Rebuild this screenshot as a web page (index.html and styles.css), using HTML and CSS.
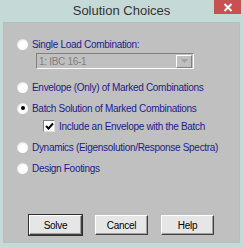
FILE: index.html
```html
<!DOCTYPE html>
<html lang="en">
<head>
    <meta charset="UTF-8">
    <title>Solution Choices</title>
    <link rel="stylesheet" href="styles.css">
</head>
<body>

    <div class="window">
        <div class="title-bar">
            <span class="title">Solution Choices</span>
            <span class="close-btn">
                <svg width="10" height="9" viewBox="0 0 10 9">
                    <path d="M1.5 1 L8.5 8 M8.5 1 L1.5 8" stroke="#fff" stroke-width="2" fill="none"/>
                </svg>
            </span>
        </div>

        <div class="client">
            <div class="option first">
                <span class="radio"></span>
                <span class="label">Single Load Combination:</span>
            </div>
            <div class="combo">
                <span class="combo-text">1: IBC 16-1</span>
                <span class="combo-btn">
                    <svg width="7" height="4" viewBox="0 0 7 4"><path d="M0 0 H7 L3.5 4 Z" fill="#a0a0a0"/></svg>
                </span>
            </div>
            <div class="option">
                <span class="radio"></span>
                <span class="label">Envelope (Only) of Marked Combinations</span>
            </div>
            <div class="option">
                <span class="radio checked"></span>
                <span class="label">Batch Solution of Marked Combinations</span>
            </div>
            <div class="check-row">
                <span class="checkbox">
                    <svg width="9" height="9" viewBox="0 0 9 9"><path d="M1 4 L3.5 6.5 L8 1.5" stroke="#000" stroke-width="2" fill="none"/></svg>
                </span>
                <span class="label">Include an Envelope with the Batch</span>
            </div>
            <div class="option">
                <span class="radio"></span>
                <span class="label">Dynamics (Eigensolution/Response Spectra)</span>
            </div>
            <div class="option">
                <span class="radio"></span>
                <span class="label">Design Footings</span>
            </div>

            <div class="buttons">
                <button class="btn default">Solve</button>
                <button class="btn">Cancel</button>
                <button class="btn">Help</button>
            </div>
        </div>
    </div>

</body>
</html>
```

FILE: styles.css
```css
* {
    margin: 0;
    padding: 0;
    box-sizing: border-box;
}

body {
    background: #c5dad7;
    font-family: "Liberation Sans", Arial, sans-serif;
}

.window {
    width: 243px;
    height: 247px;
    background: #c5dad7;
    display: flex;
    flex-direction: column;
    position: relative;
}

.title-bar {
    height: 22px;
    display: flex;
    justify-content: center;
    align-items: center;
}

.title {
    font-family: "Liberation Sans", Arial, sans-serif;
    font-size: 13px;
    color: #333;
    padding-bottom: 1px;
}

.close-btn {
    position: absolute;
    top: 0;
    right: 2px;
    width: 27px;
    height: 14px;
    background: #c75050;
    display: flex;
    justify-content: center;
    align-items: center;
}

.client {
    margin: 0 3px 4px 3px;
    flex: 1;
    background: #c0c0c0;
    border: 1px solid #adc3c0;
    padding: 14px 0 7px 13px;
    display: flex;
    flex-direction: column;
}

.option,
.check-row {
    display: flex;
    align-items: center;
    height: 14px;
    gap: 4px;
    margin-top: 7px;
}

.option.first {
    margin-top: 0;
}

.label {
    font-size: 10px;
    color: #1c1c8a;
    letter-spacing: -0.3px;
    white-space: nowrap;
}

.radio {
    width: 11px;
    height: 11px;
    border-radius: 50%;
    background: radial-gradient(circle at 60% 60%, #fff 45%, #e8e8e8 70%, #b8b8b8 100%);
    display: flex;
    justify-content: center;
    align-items: center;
}

.radio.checked::after {
    content: "";
    width: 4px;
    height: 4px;
    border-radius: 50%;
    background: #000;
}

.combo {
    margin: 2px 0 0 19px;
    width: 158px;
    height: 16px;
    border: 1px solid;
    border-color: #808080 #fff #fff #808080;
    background: #c0c0c0;
    display: flex;
    align-items: center;
    justify-content: space-between;
    padding: 0 1px 0 2px;
}

.combo + .option {
    margin-top: 11px;
}

.combo-text {
    font-size: 10px;
    color: #808080;
    letter-spacing: -0.3px;
}

.combo-btn {
    width: 16px;
    height: 13px;
    border: 1px solid;
    border-color: #fff #808080 #808080 #fff;
    display: flex;
    justify-content: center;
    align-items: center;
}

.check-row {
    margin-top: 4px;
    padding-left: 26px;
    gap: 4px;
}

.checkbox {
    width: 12px;
    height: 12px;
    background: #fff;
    border: 1px solid;
    border-color: #808080 #e0e0e0 #e0e0e0 #808080;
    display: flex;
    justify-content: center;
    align-items: center;
}

.check-row + .option {
    margin-top: 7px;
}

.buttons {
    margin-top: auto;
    margin-left: -13px;
    display: flex;
    justify-content: center;
    gap: 13px;
}

.btn {
    width: 53px;
    height: 20px;
    font-family: "Liberation Sans", Arial, sans-serif;
    font-size: 10px;
    letter-spacing: -0.3px;
    color: #000;
    background: #e6e6e6;
    border: 1px solid;
    border-color: #fff #404040 #404040 #fff;
    box-shadow: inset -1px -1px 0 #a0a0a0;
}

.btn.default {
    outline: 1px solid #303030;
}
```
